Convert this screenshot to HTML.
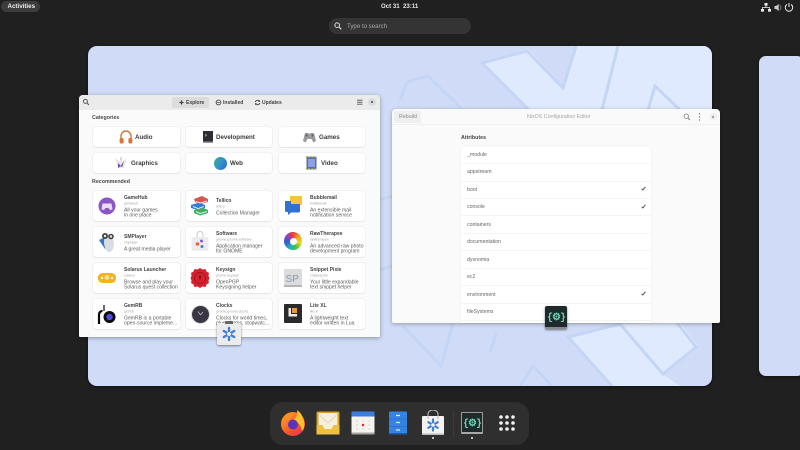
<!DOCTYPE html>
<html><head><meta charset="utf-8"><style>
html,body{margin:0;padding:0;width:800px;height:450px;overflow:hidden;background:#202020;font-family:"Liberation Sans",sans-serif}
#w{position:absolute;left:0;top:0;width:800px;height:450px;filter:blur(.3px)}
.a,.t,svg.a{position:absolute}
.t{white-space:nowrap;line-height:1;transform:translateY(1px)}
.card{position:absolute;background:#fff;border-radius:3px;box-shadow:0 0 1.5px rgba(0,0,0,.14),0 1px 1px rgba(0,0,0,.05)}
.n{font-size:5px;font-weight:bold;color:#444}
.s{font-size:3.4px;color:#a8a8a8;transform:translateY(1.5px)}
.d{font-size:5.1px;color:#5c5c5c;transform:translateY(1.6px)}
.c{font-size:6.2px;font-weight:bold;color:#3a3a3a}
.h{font-size:5.3px;font-weight:bold;color:#4a4a4a}
.r{font-size:5.2px;color:#666;left:467px}
.sep{position:absolute;left:461px;width:190px;height:1px;background:#f4f4f4}
.ck{position:absolute;left:641px}
.tab{font-size:5px;color:#444;font-weight:bold}
</style></head><body><div id="w">

<!-- top bar -->
<div class="a" style="left:1px;top:1px;width:39px;height:11px;background:#3c3c3c;border-radius:6px"></div>
<div class="t" style="left:7.500px;top:3px;font-size:6.200px;font-weight:bold;color:#eee">Activities</div>
<div class="t" style="left:381px;top:3px;font-size:6.100px;font-weight:bold;color:#e8e8e8">Oct 31&nbsp;&nbsp;23:11</div>
<svg class="a" style="left:760px;top:1px" width="35" height="12" viewBox="0 0 35 12">
<path d="M4.500 2h3v2.600h-3zM1 8h3v2.600H1zM8 8h3v2.600H8z" fill="#eee"/><path d="M6 4.600V6.500M2.500 8V6.500H9.500V8" stroke="#eee" stroke-width=".8" fill="none"/>
<path d="M14.500 5h1.600l2.600-2v7l-2.600-2h-1.600z" fill="#ccc"/><path d="M19.600 4a3 3 0 010 5" stroke="#777" stroke-width="1" fill="none"/>
<path d="M27 3.400a3.700 3.700 0 104 0" stroke="#eee" stroke-width="1" fill="none"/><path d="M29 2v4" stroke="#eee" stroke-width="1"/>
</svg>
<div class="a" style="left:329px;top:18px;width:142px;height:15.500px;background:#343434;border-radius:8px"></div>
<svg class="a" style="left:334px;top:22px" width="8" height="8" viewBox="0 0 8 8"><circle cx="3.200" cy="3.200" r="2.300" stroke="#ddd" stroke-width="1" fill="none"/><path d="M5 5l2.300 2.300" stroke="#ddd" stroke-width="1.100"/></svg>
<div class="t" style="left:347px;top:23px;font-size:6.100px;color:#a9a9a9">Type to search</div>

<!-- workspace -->
<svg class="a" style="left:88px;top:46px;border-radius:9px;box-shadow:0 1px 3px rgba(0,0,0,.5)" width="624" height="340" viewBox="88 46 624 340">
<rect x="88" y="46" width="624" height="340" fill="#d0dcf7"/>
<polygon points="480,62 528,49 563,86 575,46 712,46 712,300 600,300 528,108" fill="#e0eafe"/>
<polygon points="568,337 620,324 680,323 697,345 664,375 680,386 612,386" fill="#e0eafe"/>
<g fill="none" stroke="#c4d5f5" stroke-width="3" stroke-linejoin="miter">
<path d="M528 109L482 63L527 51L563 88L576 46"/>
<path d="M618 46L602 110"/>
<path d="M648 110L655 86L680 110"/>
<path d="M400 100L407 82L428 76L463 110"/>
<path d="M403 326L441 366L453 323M497 332L490 352"/>
<path d="M612 386L568 337L620 324L663 374L696 347L677 323"/>
<path d="M520 386L533 366L552 386"/>
<path d="M380 200L392 196M380 270L392 266"/>
</g>
</svg>
<div class="a" style="left:759px;top:56px;width:45px;height:320px;background:#d0dcf7;border-radius:7px;box-shadow:0 1px 3px rgba(0,0,0,.5)"></div>

<!-- software window -->
<div class="a" style="left:79px;top:95px;width:301px;height:242px;background:#fafafa;border-radius:4px 4px 1px 1px;box-shadow:0 1px 4px rgba(0,0,0,.35);overflow:hidden">
<div class="a" style="left:0;top:0;width:301px;height:15px;background:#ebebeb"></div>
</div>
<svg class="a" style="left:82px;top:98px" width="8" height="8" viewBox="0 0 8 8"><circle cx="3.400" cy="3.400" r="2" stroke="#555" stroke-width="1" fill="none"/><path d="M5 5l2 2" stroke="#555" stroke-width="1"/></svg>
<div class="a" style="left:172px;top:97px;width:37px;height:11px;background:#dcdcdc;border-radius:2px"></div>
<svg class="a" style="left:178px;top:99px" width="7" height="7" viewBox="0 0 7 7"><path d="M3.500 .8L4.300 2.700 6.200 3.500 4.300 4.300 3.500 6.200 2.700 4.300 .8 3.500 2.700 2.700z" fill="#444"/></svg>
<div class="t tab" style="left:186px;top:100px">Explore</div>
<svg class="a" style="left:215px;top:99px" width="7" height="7" viewBox="0 0 7 7"><circle cx="3.500" cy="3.500" r="2.400" stroke="#444" stroke-width=".9" fill="none"/><path d="M2.200 3.500h2.600" stroke="#444" stroke-width=".8"/></svg>
<div class="t tab" style="left:223px;top:100px">Installed</div>
<svg class="a" style="left:254px;top:99px" width="7" height="7" viewBox="0 0 7 7"><path d="M5.700 2.400A2.500 2.500 0 001.200 3M1.300 4.600A2.500 2.500 0 005.800 4" stroke="#444" stroke-width=".9" fill="none"/><path d="M5.900 .9v2H4zM1.100 6.100v-2H3z" fill="#444"/></svg>
<div class="t tab" style="left:262px;top:100px">Updates</div>
<svg class="a" style="left:356px;top:99px" width="8" height="7" viewBox="0 0 8 7"><path d="M1 1.200h5.500M1 3.200h5.500M1 5.200h5.500" stroke="#555" stroke-width=".9"/></svg>
<div class="a" style="left:368px;top:98px;width:8px;height:8px;background:#dcdcdc;border-radius:50%"></div>
<div class="a" style="left:371px;top:101px;width:2px;height:2px;background:#444;border-radius:50%"></div>

<div class="t h" style="left:92px;top:114.500px">Categories</div>
<div class="t h" style="left:92px;top:178.500px">Recommended</div>

<!-- category cards -->
<div class="card" style="left:92.500px;top:127px;width:87.500px;height:20px"></div>
<div class="card" style="left:186px;top:127px;width:86px;height:20px"></div>
<div class="card" style="left:279px;top:127px;width:86px;height:20px"></div>
<div class="card" style="left:92.500px;top:153px;width:87.500px;height:20px"></div>
<div class="card" style="left:186px;top:153px;width:86px;height:20px"></div>
<div class="card" style="left:279px;top:153px;width:86px;height:20px"></div>
<div class="t c" style="left:135px;top:133.500px">Audio</div>
<div class="t c" style="left:216px;top:133.500px">Development</div>
<div class="t c" style="left:319px;top:133.500px">Games</div>
<div class="t c" style="left:131px;top:159.500px">Graphics</div>
<div class="t c" style="left:230px;top:159.500px">Web</div>
<div class="t c" style="left:321px;top:159.500px">Video</div>
<svg class="a" style="left:118px;top:129px" width="16" height="16" viewBox="0 0 16 16"><path d="M3 10V7a5 5 0 0110 0v3" fill="none" stroke="#c77a3a" stroke-width="1.400"/><rect x="1.600" y="9" width="4" height="5.500" rx="1.600" fill="#d9743a"/><rect x="10.400" y="9" width="4" height="5.500" rx="1.600" fill="#d9743a"/></svg>
<svg class="a" style="left:202px;top:130px" width="12" height="14" viewBox="0 0 12 14"><rect x="1" y="1" width="10" height="12" fill="#2d2d33"/><rect x="1" y="11.500" width="10" height="1.500" fill="#9a9a9a"/><path d="M3 4l1.500 1.200L3 6.400" stroke="#ddd" stroke-width=".6" fill="none"/></svg>
<svg class="a" style="left:302px;top:130px" width="15" height="14" viewBox="0 0 15 14"><path d="M3 3h3.500l1 1 1-1H12l2 8-2.500 1.500L9.500 9h-4l-2 3.500L1 11z" fill="#9a9aa0"/><circle cx="4.500" cy="5.500" r="1" fill="#555"/><circle cx="10.500" cy="5.500" r="1" fill="#555"/></svg>
<svg class="a" style="left:113px;top:155px" width="16" height="16" viewBox="0 0 16 16"><path d="M2 3L8 7 14 3 11 13H5z" fill="#e9e6f2"/><path d="M8 1l1 3-1 3-1-3z" fill="#ccc"/><path d="M5 8l3 3-3 2z" fill="#6e4fb3"/><path d="M11 6L8 11l1 1z" fill="#333"/></svg>
<div class="a" style="left:214px;top:156.500px;width:13px;height:13px;border-radius:50%;background:linear-gradient(120deg,#3db37e,#2f8fd0 55%,#2a63c4)"></div>
<svg class="a" style="left:304px;top:155px" width="15" height="16" viewBox="0 0 15 16"><rect x="2.500" y="1.500" width="10" height="13" fill="#5a6f96"/><rect x="4" y="4" width="7" height="8" fill="#8fa0e8"/><path d="M1.500 2h12M1.500 14h12" stroke="#b9c24e" stroke-width="1.200" stroke-dasharray="1.500 1.500"/></svg>

<!-- recommended cards -->
<div class="card" style="left:92.500px;top:191px;width:87.500px;height:29.500px"></div><div class="card" style="left:186px;top:191px;width:86px;height:29.500px"></div><div class="card" style="left:279px;top:191px;width:86px;height:29.500px"></div>
<div class="card" style="left:92.500px;top:227px;width:87.500px;height:29.500px"></div><div class="card" style="left:186px;top:227px;width:86px;height:29.500px"></div><div class="card" style="left:279px;top:227px;width:86px;height:29.500px"></div>
<div class="card" style="left:92.500px;top:263px;width:87.500px;height:29.500px"></div><div class="card" style="left:186px;top:263px;width:86px;height:29.500px"></div><div class="card" style="left:279px;top:263px;width:86px;height:29.500px"></div>
<div class="card" style="left:92.500px;top:299px;width:87.500px;height:29.500px"></div><div class="card" style="left:186px;top:299px;width:86px;height:29.500px"></div><div class="card" style="left:279px;top:299px;width:86px;height:29.500px"></div>

<!-- row 1 -->
<div class="t n" style="left:124px;top:195px">GameHub</div><div class="t s" style="left:124px;top:201px">gamehub</div><div class="t d" style="left:124px;top:206.500px">All your games</div><div class="t d" style="left:124px;top:212px">in one place</div>
<div class="t n" style="left:216px;top:198px">Tellico</div><div class="t s" style="left:216px;top:204px">tellico</div><div class="t d" style="left:216px;top:209.500px">Collection Manager</div>
<div class="t n" style="left:310px;top:195px">Bubblemail</div><div class="t s" style="left:310px;top:201px">bubblemail</div><div class="t d" style="left:310px;top:206.500px">An extensible mail</div><div class="t d" style="left:310px;top:212px">notification service</div>
<!-- row 2 -->
<div class="t n" style="left:124px;top:234px">SMPlayer</div><div class="t s" style="left:124px;top:240px">smplayer</div><div class="t d" style="left:124px;top:245.500px">A great media player</div>
<div class="t n" style="left:216px;top:231px">Software</div><div class="t s" style="left:216px;top:237px">gnome.gnome-software</div><div class="t d" style="left:216px;top:242.500px">Application manager</div><div class="t d" style="left:216px;top:248px">for GNOME</div>
<div class="t n" style="left:310px;top:231px">RawTherapee</div><div class="t s" style="left:310px;top:237px">rawtherapee</div><div class="t d" style="left:310px;top:242.500px">An advanced raw photo</div><div class="t d" style="left:310px;top:248px">development program</div>
<!-- row 3 -->
<div class="t n" style="left:124px;top:267px">Solarus Launcher</div><div class="t s" style="left:124px;top:273px">solarus</div><div class="t d" style="left:124px;top:278.500px">Browse and play your</div><div class="t d" style="left:124px;top:284px">Solarus quest collection</div>
<div class="t n" style="left:216px;top:267px">Keysign</div><div class="t s" style="left:216px;top:273px">gnome.keysign</div><div class="t d" style="left:216px;top:278.500px">OpenPGP</div><div class="t d" style="left:216px;top:284px">Keysigning helper</div>
<div class="t n" style="left:310px;top:267px">Snippet Pixie</div><div class="t s" style="left:310px;top:273px">snippetpixie</div><div class="t d" style="left:310px;top:278.500px">Your little expandable</div><div class="t d" style="left:310px;top:284px">text snippet helper</div>
<!-- row 4 -->
<div class="t n" style="left:124px;top:303px">GemRB</div><div class="t s" style="left:124px;top:309px">gemrb</div><div class="t d" style="left:124px;top:314.500px">GemRB is a portable</div><div class="t d" style="left:124px;top:320px">open-source impleme...</div>
<div class="t n" style="left:216px;top:303px">Clocks</div><div class="t s" style="left:216px;top:309px">gnome.gnome-clocks</div><div class="t d" style="left:216px;top:314.500px">Clocks for world times,</div><div class="t d" style="left:216px;top:320px">plus alarms, stopwatc...</div>
<div class="t n" style="left:310px;top:303px">Lite XL</div><div class="t s" style="left:310px;top:309px">lite-xl</div><div class="t d" style="left:310px;top:314.500px">A lightweight text</div><div class="t d" style="left:310px;top:320px">editor written in Lua</div>

<!-- rec icons -->
<svg class="a" style="left:98px;top:196px" width="18" height="20" viewBox="0 0 18 20"><circle cx="9" cy="10" r="8.500" fill="#8b55c6"/><path d="M4.500 7.500h9l1 6-2.500 .5-1.500-2h-3l-1.500 2-2.500-.5z" fill="#e9ddf6"/></svg>
<svg class="a" style="left:190px;top:195px" width="20" height="21" viewBox="0 0 20 21"><path d="M4 4l8-3 6 3v3l-8 2-5-2z" fill="#d9534f"/><path d="M1 10l8-2.500 6 2.500v3l-7 2-7-2z" fill="#2f7fd6"/><path d="M4 15l8-2.500 6 2.500v3l-8 2.500-6-2.500z" fill="#3fae62"/><path d="M6 6.500l4 1.500 7-2M3 11.500l5 2 6-2M6 16.500l4 2 7-2" fill="none" stroke="#fff" stroke-width=".9"/></svg>
<svg class="a" style="left:283px;top:195px" width="20" height="21" viewBox="0 0 20 21"><rect x="7" y="1" width="12" height="9" fill="#f5c542"/><path d="M2 6h6v3h9v7a1.500 1.500 0 01-1.500 1.500H8L5 20v-3H3.500A1.500 1.500 0 012 15.500z" fill="#2f72d4"/></svg>
<svg class="a" style="left:97px;top:231px" width="20" height="22" viewBox="0 0 20 22"><path d="M2 9l8-4 4 7-6 6z" fill="#3f74c4"/><path d="M10 4c4 0 7 4 7 9s-2 8-5 8-5-6-5-10 1-7 3-7z" fill="#d8dde4"/><circle cx="8" cy="5" r="3" fill="#444"/><circle cx="14" cy="5.500" r="2.800" fill="#444"/><circle cx="8" cy="5" r="1.200" fill="#eee"/><circle cx="14" cy="5.500" r="1.200" fill="#eee"/></svg>
<svg class="a" style="left:190px;top:231px" width="20" height="22" viewBox="0 0 20 22"><rect x="1.500" y="6" width="17" height="14" rx="1" fill="#ececec"/><path d="M7 6V3.500a3 3 0 016 0V6" fill="none" stroke="#bbb" stroke-width=".8"/><circle cx="7.500" cy="13" r="1.800" fill="#e5604a"/><circle cx="11.500" cy="10" r="1.500" fill="#8d5bc4"/><circle cx="12" cy="15.500" r="1.500" fill="#3a7ce0"/></svg>
<div class="a" style="left:284px;top:232px;width:18px;height:18px;border-radius:50%;background:conic-gradient(#e8403a,#f0a020,#e8e020,#48c040,#20b0c0,#3060d0,#9040c0,#e8403a)"></div>
<div class="a" style="left:289.500px;top:237.500px;width:7px;height:7px;border-radius:50%;background:#fff"></div>
<svg class="a" style="left:97px;top:268px" width="20" height="20" viewBox="0 0 20 20"><rect x="1" y="5" width="18" height="10" rx="4.500" fill="#f4b120"/><circle cx="10" cy="9.500" r="2.500" fill="#fbe08a"/><circle cx="5" cy="10" r="1.200" fill="#fff"/><circle cx="15" cy="10" r="1.200" fill="#fff"/></svg>
<svg class="a" style="left:190px;top:267px" width="20" height="22" viewBox="0 0 20 22"><path d="M10 1l2.500 1.500 3-.5 1 2.500 2.500 1.500-.5 3 1 2-1 2.500.5 2.500-2.500 1.500-1 2.500-3-.5L10 21l-2.500-1.500-3 .5-1-2.500L1 16l.5-2.500L.5 11l1-2-.5-3L3.500 4.500l1-2.500 3 .5z" fill="#d4232e"/><circle cx="10" cy="11" r="5.500" fill="none" stroke="#a3101c" stroke-width=".8"/><circle cx="10" cy="9.800" r="1.300" fill="#7d0c14"/><path d="M10 10v3.500" stroke="#7d0c14" stroke-width="1"/></svg>
<svg class="a" style="left:284px;top:268px" width="18" height="20" viewBox="0 0 18 20"><rect x="0" y="1" width="18" height="18" fill="#dcdcdc"/><rect x="0" y="17" width="18" height="2" fill="#b5b5b5"/><text x="1.500" y="14" font-size="10" font-family="Liberation Sans" fill="#7d9cbc">SP</text></svg>
<svg class="a" style="left:97px;top:304px" width="20" height="22" viewBox="0 0 20 22"><circle cx="12.500" cy="13" r="6" fill="#0a0a0a"/><circle cx="12.500" cy="13" r="3.200" fill="#4f49e0"/><path d="M2 20V11c0-3 2-4 3.500-4" stroke="#0a0a0a" stroke-width="2.200" fill="none"/><path d="M7 7V1" stroke="#0a0a0a" stroke-width="1.200"/></svg>
<div class="a" style="left:191.500px;top:306px;width:17px;height:17px;border-radius:50%;background:#3a3644;box-shadow:0 0 0 1px #ddd"></div>
<svg class="a" style="left:191.500px;top:306px" width="17" height="17" viewBox="0 0 17 17"><path d="M8.500 9L6 5.500M8.500 9L11 6" stroke="#bbb" stroke-width=".8"/></svg>
<svg class="a" style="left:283px;top:299.500px" width="20" height="27" viewBox="0 0 20 27"><rect x="1" y="4" width="18" height="19" rx="1" fill="#2a2a2c"/><path d="M5.500 8v8.500H14v-2.500H8V8z" fill="#eee"/><rect x="9" y="8" width="5" height="5" fill="#e89a3a"/></svg>

<!-- config window -->
<div class="a" style="left:392px;top:109px;width:328px;height:214px;background:#fafafa;border-radius:4px 4px 2px 2px;box-shadow:0 1px 4px rgba(0,0,0,.3)"></div>
<div class="a" style="left:392px;top:124px;width:328px;height:1px;background:#f0f0f0"></div>
<div class="a" style="left:394px;top:111px;width:27px;height:12px;background:#efefef;border-radius:2px"></div>
<div class="t" style="left:399px;top:114px;font-size:5.300px;color:#8a8a8a">Rebuild</div>
<div class="t" style="left:527px;top:114px;font-size:5.300px;color:#a5a5a5">NixOS Configuration Editor</div>
<svg class="a" style="left:683px;top:113px" width="8" height="8" viewBox="0 0 8 8"><circle cx="3.200" cy="3.200" r="2.200" stroke="#777" stroke-width=".8" fill="none"/><path d="M4.900 4.900L7 7" stroke="#777" stroke-width=".9"/></svg>
<svg class="a" style="left:698px;top:113px" width="3" height="8" viewBox="0 0 3 8"><circle cx="1.500" cy="1" r=".7" fill="#777"/><circle cx="1.500" cy="4" r=".7" fill="#777"/><circle cx="1.500" cy="7" r=".7" fill="#777"/></svg>
<div class="a" style="left:709.500px;top:113px;width:7px;height:7px;background:#eee;border-radius:50%"></div>
<div class="a" style="left:712px;top:115.500px;width:2px;height:2px;background:#888;border-radius:50%"></div>
<div class="t" style="left:461px;top:134.500px;font-size:5.300px;font-weight:bold;color:#444">Attributes</div>
<div class="a" style="left:461px;top:146px;width:190px;height:177px;background:#fff;border-radius:3px 3px 0 0;box-shadow:0 0 1.500px rgba(0,0,0,.1)"></div>
<div class="sep" style="top:163px"></div><div class="sep" style="top:180.500px"></div><div class="sep" style="top:198px"></div><div class="sep" style="top:215px"></div><div class="sep" style="top:232.500px"></div><div class="sep" style="top:250px"></div><div class="sep" style="top:267.500px"></div><div class="sep" style="top:285px"></div><div class="sep" style="top:302.500px"></div><div class="sep" style="top:320px"></div>
<div class="t r" style="top:151.500px">_module</div>
<div class="t r" style="top:169px">appstream</div>
<div class="t r" style="top:186.500px">boot</div>
<div class="t r" style="top:204px">console</div>
<div class="t r" style="top:221.500px">containers</div>
<div class="t r" style="top:239px">documentation</div>
<div class="t r" style="top:256.500px">dysnomia</div>
<div class="t r" style="top:274px">ec2</div>
<div class="t r" style="top:291.500px">environment</div>
<div class="t r" style="top:309px">fileSystems</div>
<svg class="ck" style="top:186px" width="5" height="5" viewBox="0 0 5 5"><path d="M.6 2.800L1.800 4 4.400 .8" stroke="#444" stroke-width=".9" fill="none"/></svg>
<svg class="ck" style="top:203.500px" width="5" height="5" viewBox="0 0 5 5"><path d="M.6 2.800L1.800 4 4.400 .8" stroke="#444" stroke-width=".9" fill="none"/></svg>
<svg class="ck" style="top:291px" width="5" height="5" viewBox="0 0 5 5"><path d="M.6 2.800L1.800 4 4.400 .8" stroke="#444" stroke-width=".9" fill="none"/></svg>

<!-- window thumb icons -->
<div class="a" style="left:217px;top:323px;width:24px;height:22px;background:#ececec;border-radius:2px;box-shadow:0 1px 2px rgba(0,0,0,.45)"></div>
<div class="a" style="left:225px;top:321px;width:8px;height:3px;background:#666;border-radius:1px 1px 0 0"></div>
<svg class="a" style="left:221px;top:326px" width="16" height="16" viewBox="0 0 16 16"><g stroke="#3f7fd4" stroke-width="2.400" stroke-linecap="round"><path d="M8 2v12"/><path d="M2.800 5l10.400 6"/><path d="M13.200 5L2.800 11"/></g><circle cx="8" cy="8" r="2" fill="#ececec"/></svg>
<div class="a" style="left:545px;top:306px;width:22px;height:23px;background:#1f2a2d;border-radius:2px;border-bottom:2px solid #8a8a8a;box-sizing:border-box;box-shadow:0 1px 2px rgba(0,0,0,.5)"></div>
<div class="t" style="left:547px;top:311px;font:bold 10px 'Liberation Mono',monospace;color:#6fd3b4;letter-spacing:-1px">{⚙}</div>

<!-- dock -->
<div class="a" style="left:270px;top:402px;width:259px;height:43px;background:#2f2f2f;border-radius:13px"></div>
<div class="a" style="left:453px;top:410px;width:1px;height:27px;background:#3b3b3b"></div>
<svg class="a" style="left:280px;top:409px" width="26" height="28" viewBox="0 0 26 28"><defs><linearGradient id="ff" x1="0" y1="0" x2="1" y2="1"><stop offset="0" stop-color="#ffb020"/><stop offset=".6" stop-color="#f5502c"/><stop offset="1" stop-color="#e62e6a"/></linearGradient></defs><circle cx="13" cy="15" r="12" fill="url(#ff)"/><path d="M17 1c3 2 6 6 7 11 1 4 0 8-2 10-1-6-5-10-9-11 3-2 5-5 4-10z" fill="#ffc02a"/><circle cx="13" cy="15.500" r="5" fill="#5a35b8"/><path d="M4 8c3-3 8-4 11-2-3 0-5 2-6 5-2 0-4-1-5-3z" fill="#ff8a2a"/></svg>
<svg class="a" style="left:316px;top:411px" width="24" height="24" viewBox="0 0 24 24"><rect x=".5" y=".5" width="23" height="23" rx="1.500" fill="#d9a11c"/><rect x="2.500" y="2" width="19" height="19" fill="#f5efdd"/><path d="M2.500 3l9.500 9 9.500-9" fill="none" stroke="#e3d8bc" stroke-width="1"/><path d="M.5 14h6l2 4h7l2-4h6v9.500H.5z" fill="#f0c040"/></svg>
<svg class="a" style="left:351px;top:411px" width="24" height="24" viewBox="0 0 24 24"><rect x=".5" y=".5" width="23" height="23" fill="#f5f3ef"/><rect x=".5" y=".5" width="23" height="5" fill="#3a7ce0"/><rect x=".5" y="21.500" width="23" height="2" fill="#a8a4a0"/><g fill="#d8d4d0"><circle cx="6" cy="10" r=".8"/><circle cx="12" cy="10" r=".8"/><circle cx="18" cy="10" r=".8"/><circle cx="6" cy="14" r=".8"/><circle cx="18" cy="14" r=".8"/><circle cx="6" cy="18" r=".8"/><circle cx="12" cy="18" r=".8"/><circle cx="18" cy="18" r=".8"/></g><circle cx="12" cy="14" r="1.300" fill="#e0332e"/></svg>
<svg class="a" style="left:388px;top:411px" width="20" height="24" viewBox="0 0 20 24"><rect x="1" y=".5" width="18" height="23" rx="1" fill="#3584e4"/><rect x="1" y="22" width="18" height="1.500" fill="#1c5cb0"/><path d="M1 8h18M1 15.500h18" stroke="#2a6fc8" stroke-width=".7"/><path d="M8 4.500h4M8 11.500h4M8 19h4" stroke="#e6effb" stroke-width="1.200"/></svg>
<svg class="a" style="left:421px;top:410px" width="24" height="26" viewBox="0 0 24 26"><rect x="1" y="6" width="22" height="19" rx="1" fill="#f2f2f0"/><rect x="1" y="23.500" width="22" height="1.500" fill="#bbb"/><path d="M7 9V4a5 4 0 0110 0v5" fill="none" stroke="#bfbfbf" stroke-width="1"/><g stroke="#3f7fd4" stroke-width="2.200" stroke-linecap="round"><path d="M12 9.500v11"/><path d="M7.300 12.200l9.400 5.600"/><path d="M16.700 12.200l-9.400 5.600"/></g><circle cx="12" cy="15" r="1.800" fill="#f2f2f0"/></svg>
<div class="a" style="left:461px;top:412px;width:22px;height:22px;background:#1f2a2d;border:1px solid #9a9a9a;border-bottom:2px solid #a8a8a8;box-sizing:border-box;border-radius:1px"></div>
<div class="t" style="left:463px;top:417px;font:bold 10px 'Liberation Mono',monospace;color:#6fd3b4;letter-spacing:-1px">{⚙}</div>
<div class="a" style="left:432px;top:437px;width:2px;height:2px;background:#eee;border-radius:50%"></div>
<div class="a" style="left:471px;top:437px;width:2px;height:2px;background:#eee;border-radius:50%"></div>
<svg class="a" style="left:498px;top:414px" width="18" height="18" viewBox="0 0 18 18"><g fill="#f2f2f2"><circle cx="3" cy="3" r="1.800"/><circle cx="9" cy="3" r="1.800"/><circle cx="15" cy="3" r="1.800"/><circle cx="3" cy="9" r="1.800"/><circle cx="9" cy="9" r="1.800"/><circle cx="15" cy="9" r="1.800"/><circle cx="3" cy="15" r="1.800"/><circle cx="9" cy="15" r="1.800"/><circle cx="15" cy="15" r="1.800"/></g></svg>
</div></body></html>
